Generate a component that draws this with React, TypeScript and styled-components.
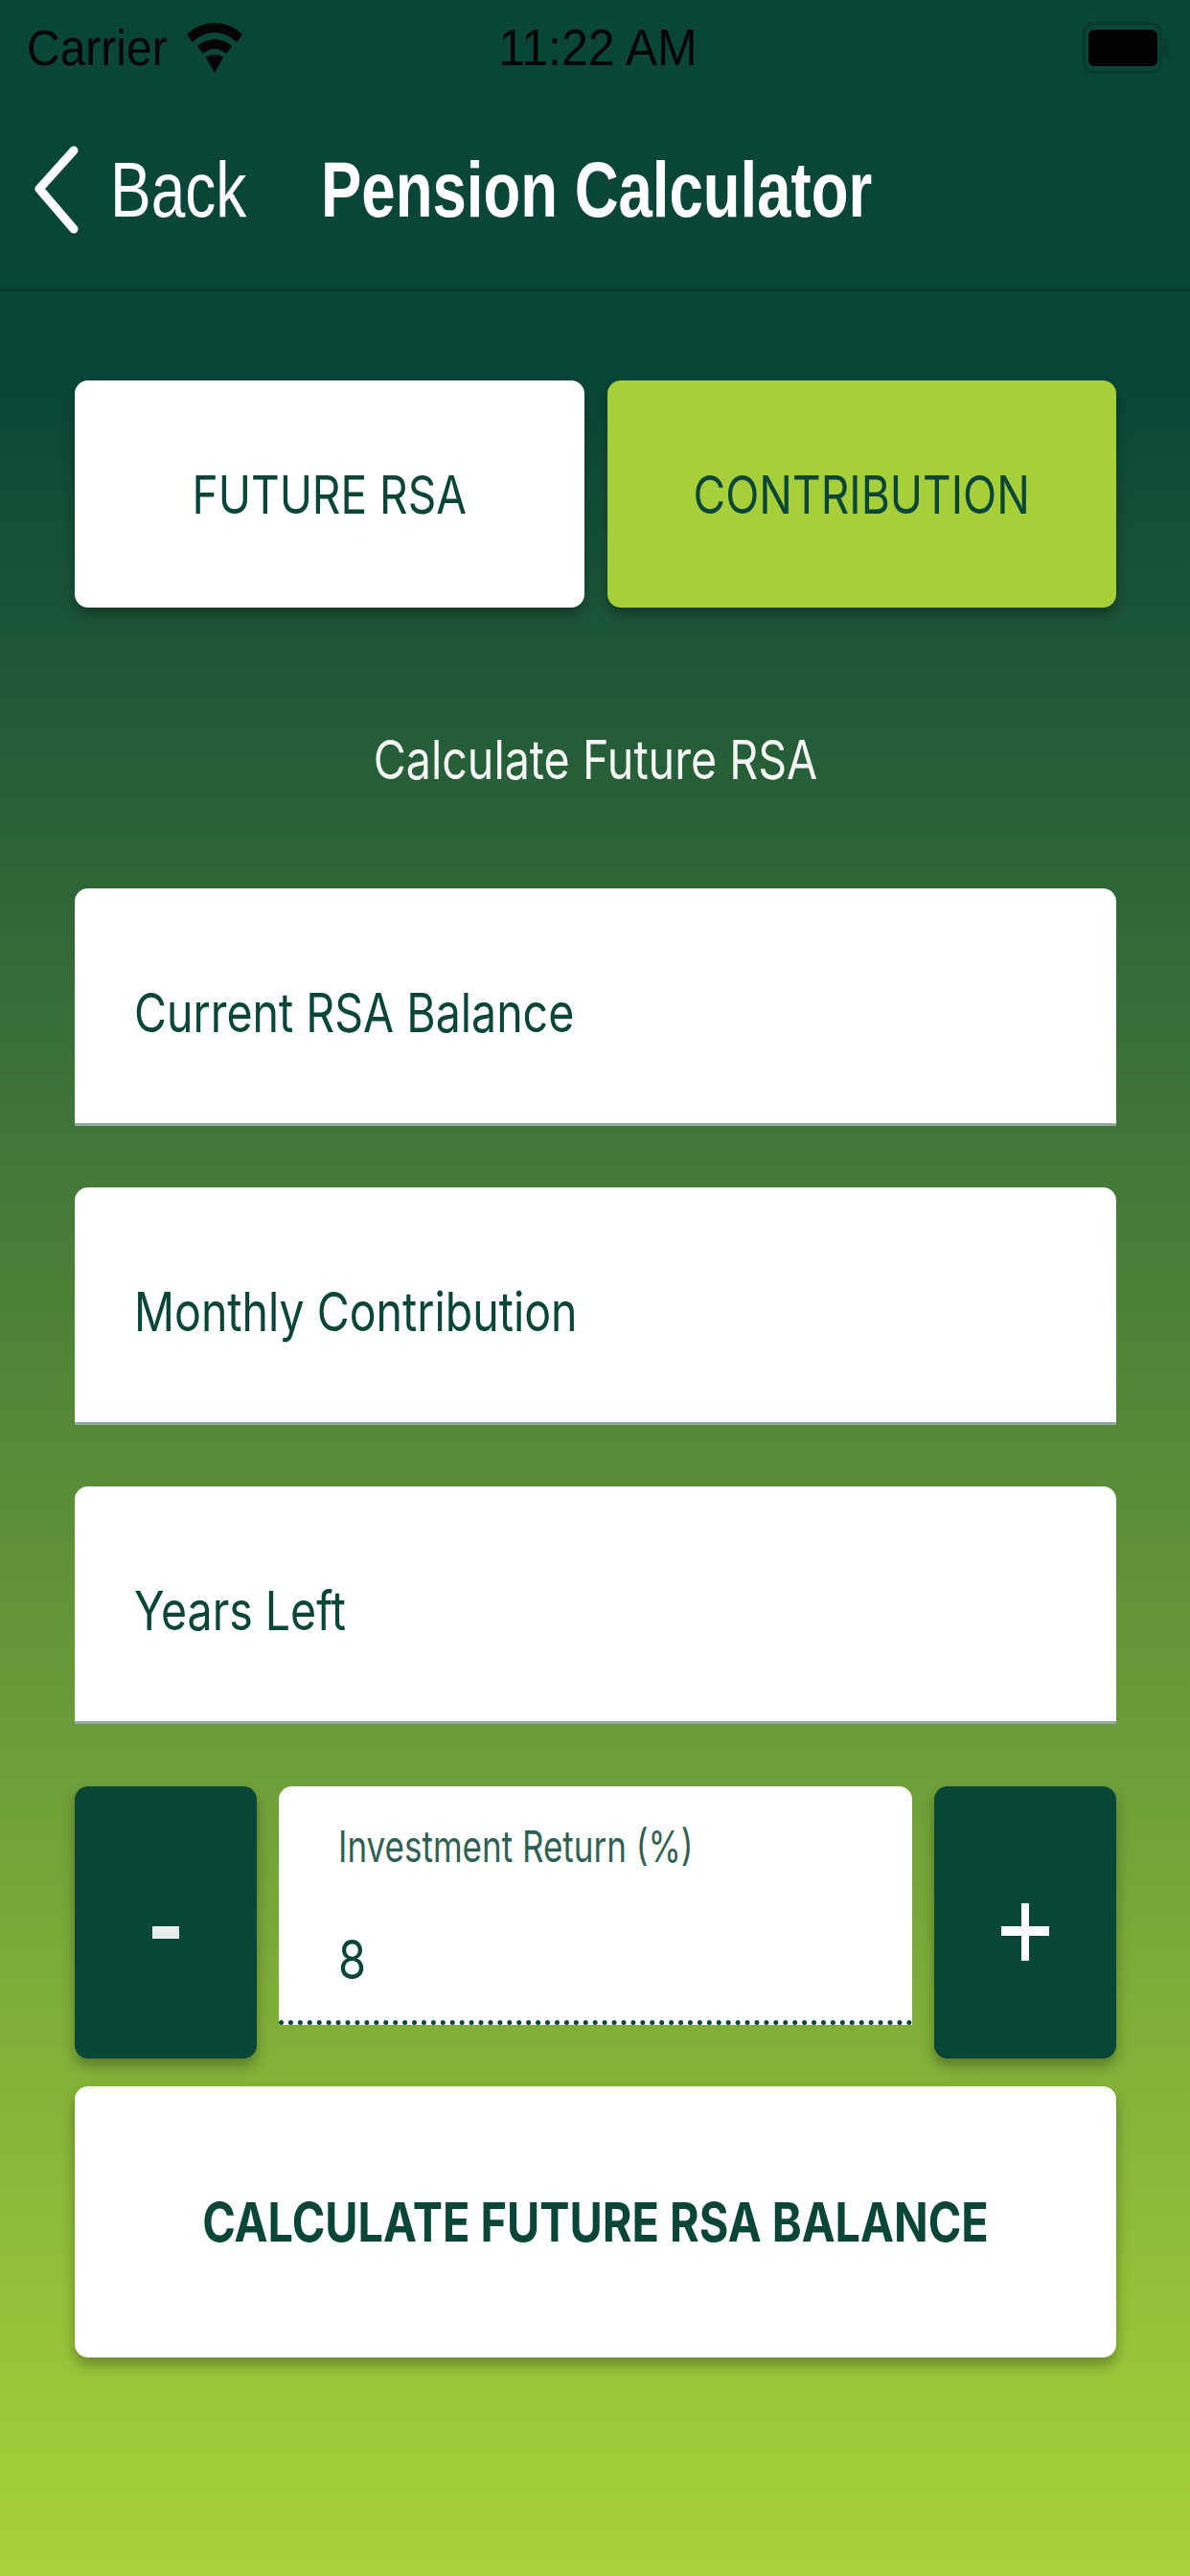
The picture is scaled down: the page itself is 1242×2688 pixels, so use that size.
import React from 'react';
import styled, { createGlobalStyle } from 'styled-components';

const DARK = '#0a4637';

const GlobalStyle = createGlobalStyle`
  html, body { margin: 0; padding: 0; }
  body { font-family: "Inter", "Liberation Sans", sans-serif; }
  * { box-sizing: border-box; }
`;

const Screen = styled.div`
  width: 1242px;
  height: 2688px;
  display: flex;
  flex-direction: column;
  overflow: hidden;
  background: linear-gradient(180deg, ${DARK} 0, ${DARK} 400px, #a8d23a 2688px);
`;

const StatusBar = styled.div`
  height: 100px;
  display: grid;
  grid-template-columns: 1fr auto 1fr;
  align-items: center;
  padding: 0 22px 0 28px;
  background: ${DARK};
  color: #050505;
`;

const StatusLeft = styled.div`
  display: flex;
  align-items: center;
  gap: 20px;
`;

const StatusRight = styled.div`
  display: flex;
  justify-content: flex-end;
`;

// the source picture is squeezed sideways, so the glyphs are stretched upward
const Tall = styled.span<{ $y?: number }>`
  display: inline-block;
  white-space: nowrap;
  transform: scaleY(${({ $y }) => $y ?? 1.2});
`;

const StatusText = styled(Tall)`
  font-family: "Liberation Sans", sans-serif;
  font-size: 48px;
  transform: scaleY(1.08);
`;

const ClockText = styled(StatusText)`
  font-size: 50px;
`;

const NavBar = styled.div`
  height: 204px;
  display: flex;
  align-items: center;
  padding: 0 0 6px 36px;
  background: ${DARK};
  border-bottom: 3px solid #083a2d;
  color: #fff;
`;

const BackLink = styled.div`
  width: 299px;
  display: flex;
  align-items: center;
  gap: 33px;
`;

const BackText = styled(Tall)`
  font-family: "Liberation Sans", sans-serif;
  font-size: 64px;
  transform: scaleY(1.28);
`;

const NavTitle = styled(Tall)`
  font-family: "Liberation Sans", sans-serif;
  font-size: 63.5px;
  font-weight: 700;
  transform: scaleY(1.28);
`;

const Content = styled.div`
  display: flex;
  flex-direction: column;
  padding: 93px 77px 0 78px;
`;

const Tabs = styled.div`
  display: grid;
  grid-template-columns: 1fr 1fr;
  gap: 24px;
`;

const Tab = styled.div<{ $active?: boolean }>`
  height: 237px;
  display: flex;
  align-items: center;
  justify-content: center;
  border-radius: 14px;
  background: ${({ $active }) => ($active ? '#a6cf3a' : '#fff')};
  box-shadow: 0 8px 14px rgba(0, 0, 0, 0.3);
  color: ${DARK};
  font-size: 46px;
`;

const Heading = styled.div`
  height: 293px;
  display: flex;
  align-items: center;
  justify-content: center;
  padding-top: 24px;
  color: #f4f7f4;
  font-size: 46.6px;
`;

const Fields = styled.div`
  display: flex;
  flex-direction: column;
  gap: 64px;
`;

const Field = styled.div`
  height: 248px;
  display: flex;
  align-items: center;
  padding: 14px 62px 0;
  background: #fff;
  border-radius: 14px 14px 0 0;
  border-bottom: 3px solid #8fa99f;
  color: ${DARK};
  font-size: 46.5px;
`;

const Stepper = styled.div`
  display: grid;
  grid-template-columns: 190px 1fr 190px;
  gap: 23px;
  margin-top: 65px;
  height: 284px;
`;

const StepButton = styled.div`
  display: flex;
  align-items: center;
  justify-content: center;
  padding-top: 20px;
  background: ${DARK};
  border-radius: 14px;
  box-shadow: 0 8px 14px rgba(0, 0, 0, 0.3);
  color: #fff;
`;

const Minus = styled.div`
  width: 28px;
  height: 13px;
  background: #e8eeeb;
`;

const ReturnField = styled.div`
  height: 249px;
  display: flex;
  flex-direction: column;
  padding: 41px 62px 0;
  background: #fff;
  border-radius: 14px 14px 0 0;
  border-bottom: 5px dotted ${DARK};
  color: ${DARK};
`;

const ReturnLabel = styled(Tall)`
  font-size: 35px;
  align-self: flex-start;
  opacity: 0.85;
  transform: scaleY(1.28);
`;

const ReturnValue = styled(Tall)`
  margin-top: 68px;
  font-size: 47px;
  align-self: flex-start;
`;

const Submit = styled.div`
  height: 283px;
  margin-top: 29px;
  display: flex;
  align-items: center;
  justify-content: center;
  background: #fff;
  border-radius: 14px;
  box-shadow: 0 8px 14px rgba(0, 0, 0, 0.3);
  color: ${DARK};
  font-size: 46.8px;
  font-weight: 700;
`;

const WifiIcon = () => (
  <svg width="58" height="52" viewBox="0 0 58 52" fill="#050505">
    <path d="M29 0C18 0 8 4 0 12l6 8c6-6 14-10 23-10s17 4 23 10l6-8C50 4 40 0 29 0z" />
    <path d="M29 17c-7 0-13 3-18 7l6 8c3-3 7-5 12-5s9 2 12 5l6-8c-5-4-11-7-18-7z" />
    <path d="M29 33c-4 0-7 1-9 3l9 16 9-16c-2-2-5-3-9-3z" />
  </svg>
);

const BatteryIcon = () => (
  <svg width="90" height="54" viewBox="0 0 90 54">
    <rect x="1.5" y="1.5" width="80" height="51" rx="10" fill="none" stroke="#083a2d" strokeWidth="3" />
    <rect x="6" y="8" width="72" height="38" rx="6" fill="#020202" />
    <rect x="84" y="18" width="5" height="18" rx="2" fill="#083a2d" />
  </svg>
);

const ChevronIcon = () => (
  <svg width="46" height="92" viewBox="0 0 46 92" fill="none" stroke="#fff" strokeWidth="9" strokeLinecap="round" strokeLinejoin="round">
    <path d="M41 5L5 45l36 42" />
  </svg>
);

const PlusIcon = () => (
  <svg width="50" height="60" viewBox="0 0 50 60" fill="#fff">
    <rect x="21" y="0" width="8" height="60" />
    <rect x="0" y="24" width="50" height="10" />
  </svg>
);

export default function App() {
  return (
    <Screen>
      <GlobalStyle />
      <StatusBar>
        <StatusLeft>
          <StatusText>Carrier</StatusText>
          <WifiIcon />
        </StatusLeft>
        <ClockText>11:22 AM</ClockText>
        <StatusRight>
          <BatteryIcon />
        </StatusRight>
      </StatusBar>
      <NavBar>
        <BackLink>
          <ChevronIcon />
          <BackText>Back</BackText>
        </BackLink>
        <NavTitle>Pension Calculator</NavTitle>
      </NavBar>
      <Content>
        <Tabs>
          <Tab>
            <Tall>FUTURE RSA</Tall>
          </Tab>
          <Tab $active>
            <Tall>CONTRIBUTION</Tall>
          </Tab>
        </Tabs>
        <Heading>
          <Tall>Calculate Future RSA</Tall>
        </Heading>
        <Fields>
          <Field>
            <Tall>Current RSA Balance</Tall>
          </Field>
          <Field>
            <Tall>Monthly Contribution</Tall>
          </Field>
          <Field>
            <Tall>Years Left</Tall>
          </Field>
        </Fields>
        <Stepper>
          <StepButton>
            <Minus />
          </StepButton>
          <ReturnField>
            <ReturnLabel>Investment Return (%)</ReturnLabel>
            <ReturnValue>8</ReturnValue>
          </ReturnField>
          <StepButton>
            <PlusIcon />
          </StepButton>
        </Stepper>
        <Submit>
          <Tall>CALCULATE FUTURE RSA BALANCE</Tall>
        </Submit>
      </Content>
    </Screen>
  );
}
